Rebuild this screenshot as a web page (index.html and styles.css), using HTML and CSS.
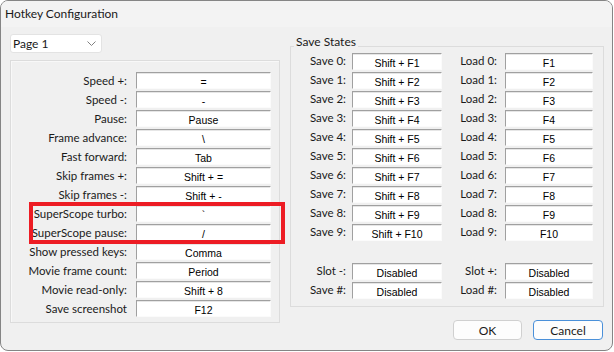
FILE: index.html
```html
<!DOCTYPE html>
<html lang="en">
<head>
    <meta charset="UTF-8">
    <meta name="viewport" content="width=device-width, initial-scale=1.0">
    <title>Hotkey Configuration</title>
    <link rel="stylesheet" href="styles.css">
</head>
<body>
    <div class="window">
        <div class="titlebar">Hotkey Configuration</div>

        <div class="content">
            <div class="col-left">
                <div class="select">
                    <span>Page 1</span>
                    <svg class="chevron" width="9" height="5" viewBox="0 0 9 5">
                        <polyline points="0.5,0.5 4.5,4.5 8.5,0.5" fill="none" stroke="#808080" stroke-width="1"/>
                    </svg>
                </div>

                <div class="panel">
                    <div class="hotkeys">
                        <label>Speed +:</label><div class="key">=</div>
                        <label>Speed -:</label><div class="key">-</div>
                        <label>Pause:</label><div class="key">Pause</div>
                        <label>Frame advance:</label><div class="key">\</div>
                        <label>Fast forward:</label><div class="key">Tab</div>
                        <label>Skip frames +:</label><div class="key">Shift + =</div>
                        <label>Skip frames -:</label><div class="key">Shift + -</div>
                        <label>SuperScope turbo:</label><div class="key">`</div>
                        <label>SuperScope pause:</label><div class="key">/</div>
                        <label>Show pressed keys:</label><div class="key">Comma</div>
                        <label>Movie frame count:</label><div class="key">Period</div>
                        <label>Movie read-only:</label><div class="key">Shift + 8</div>
                        <label>Save screenshot</label><div class="key">F12</div>
                    </div>
                </div>
            </div>

            <div class="col-right">
                <fieldset class="group">
                    <legend>Save States</legend>
                    <div class="slots">
                        <label>Save 0:</label><div class="key">Shift + F1</div><label class="lbl2">Load 0:</label><div class="key">F1</div>
                        <label>Save 1:</label><div class="key">Shift + F2</div><label class="lbl2">Load 1:</label><div class="key">F2</div>
                        <label>Save 2:</label><div class="key">Shift + F3</div><label class="lbl2">Load 2:</label><div class="key">F3</div>
                        <label>Save 3:</label><div class="key">Shift + F4</div><label class="lbl2">Load 3:</label><div class="key">F4</div>
                        <label>Save 4:</label><div class="key">Shift + F5</div><label class="lbl2">Load 4:</label><div class="key">F5</div>
                        <label>Save 5:</label><div class="key">Shift + F6</div><label class="lbl2">Load 5:</label><div class="key">F6</div>
                        <label>Save 6:</label><div class="key">Shift + F7</div><label class="lbl2">Load 6:</label><div class="key">F7</div>
                        <label>Save 7:</label><div class="key">Shift + F8</div><label class="lbl2">Load 7:</label><div class="key">F8</div>
                        <label>Save 8:</label><div class="key">Shift + F9</div><label class="lbl2">Load 8:</label><div class="key">F9</div>
                        <label>Save 9:</label><div class="key">Shift + F10</div><label class="lbl2">Load 9:</label><div class="key">F10</div>
                    </div>
                    <div class="slots slots-extra">
                        <label>Slot -:</label><div class="key">Disabled</div><label class="lbl2">Slot +:</label><div class="key">Disabled</div>
                        <label>Save #:</label><div class="key">Disabled</div><label class="lbl2">Load #:</label><div class="key">Disabled</div>
                    </div>
                </fieldset>

                <div class="buttons">
                    <button class="btn">OK</button>
                    <button class="btn btn-default">Cancel</button>
                </div>
            </div>
        </div>

        <div class="highlight"></div>
    </div>
</body>
</html>
```

FILE: styles.css
```css
body {
    margin: 0;
    padding: 0;
    background-color: #fff;
    font-family: 'Lato', 'Noto Sans', sans-serif;
    font-size: 11.5px;
    color: #1a1a1a;
}

.window {
    position: relative;
    width: 611px;
    height: 349px;
    border: 1px solid #858585;
    border-radius: 8px;
    background-color: #f0f0f0;
    overflow: hidden;
}

.titlebar {
    height: 26px;
    line-height: 26px;
    padding-left: 4px;
    font-size: 12px;
    background-color: #f3f3f3;
}

.content {
    display: flex;
    gap: 10px;
    padding: 7px 0 0 9px;
}

.col-left {
    width: 270px;
}

.select {
    display: flex;
    justify-content: space-between;
    align-items: center;
    width: 83px;
    height: 17px;
    padding: 0 5px 0 2px;
    border: 1px solid #e3e3e3;
    border-radius: 3px;
    background-color: #fff;
    font-size: 12px;
}

.select span {
    line-height: 17px;
}

.chevron {
    display: block;
}

.panel {
    margin-top: 7px;
    padding: 11px 8px 5px 0;
    border: 1px solid #dcdcdc;
    box-shadow: inset 1px 1px 0 #f8f8f8;
}

.hotkeys {
    display: grid;
    grid-template-columns: 116px 135px;
    grid-auto-rows: 17px;
    column-gap: 9px;
    row-gap: 2px;
}

.hotkeys label {
    text-align: right;
    line-height: 17px;
    white-space: nowrap;
}

.key {
    background-color: #fff;
    border: 1px solid;
    border-color: #a0a0a0 #fbfbfb #fbfbfb #a0a0a0;
    box-shadow: inset 0 1px 0 #e6e6e6;
    font-family: 'Liberation Sans', Arial, sans-serif;
    font-size: 10.5px;
    line-height: 17px;
    text-align: center;
    color: #000;
    white-space: nowrap;
    overflow: hidden;
    box-sizing: border-box;
    padding-top: 1px;
}

.col-right {
    width: 314px;
}

.group {
    margin: 0;
    padding: 0 10px 7px 0;
    border: 1px solid #dcdcdc;
    min-width: 0;
}

/* pad the legend below so the frame line runs near the text baseline */
.group legend {
    margin-left: 3px;
    padding: 0 2px 8px 2px;
    line-height: 16px;
    font-size: 12px;
}

.slots {
    display: grid;
    grid-template-columns: 61px 90px 63px 88px;
    grid-auto-rows: 17px;
    row-gap: 2px;
    margin-top: -5px;
}

.slots label {
    text-align: right;
    line-height: 15px;
    padding-right: 6px;
    white-space: nowrap;
}

.slots .lbl2 {
    padding-right: 8px;
}

.slots-extra {
    margin-top: 22px;
}

.buttons {
    display: flex;
    justify-content: flex-end;
    gap: 11px;
    margin-top: 13px;
    padding-right: 1px;
}

.btn {
    width: 69px;
    height: 20px;
    padding: 0;
    border: 1px solid #d0d0d0;
    border-radius: 4px;
    background-color: #fdfdfd;
    font-family: 'Lato', 'Noto Sans', sans-serif;
    font-size: 12px;
    color: #1a1a1a;
}

.btn-default {
    width: 70px;
    border-color: #4a90d9;
}

.highlight {
    position: absolute;
    left: 28px;
    top: 201px;
    width: 248px;
    height: 34px;
    border: 4px solid #ed1c24;
}
```
